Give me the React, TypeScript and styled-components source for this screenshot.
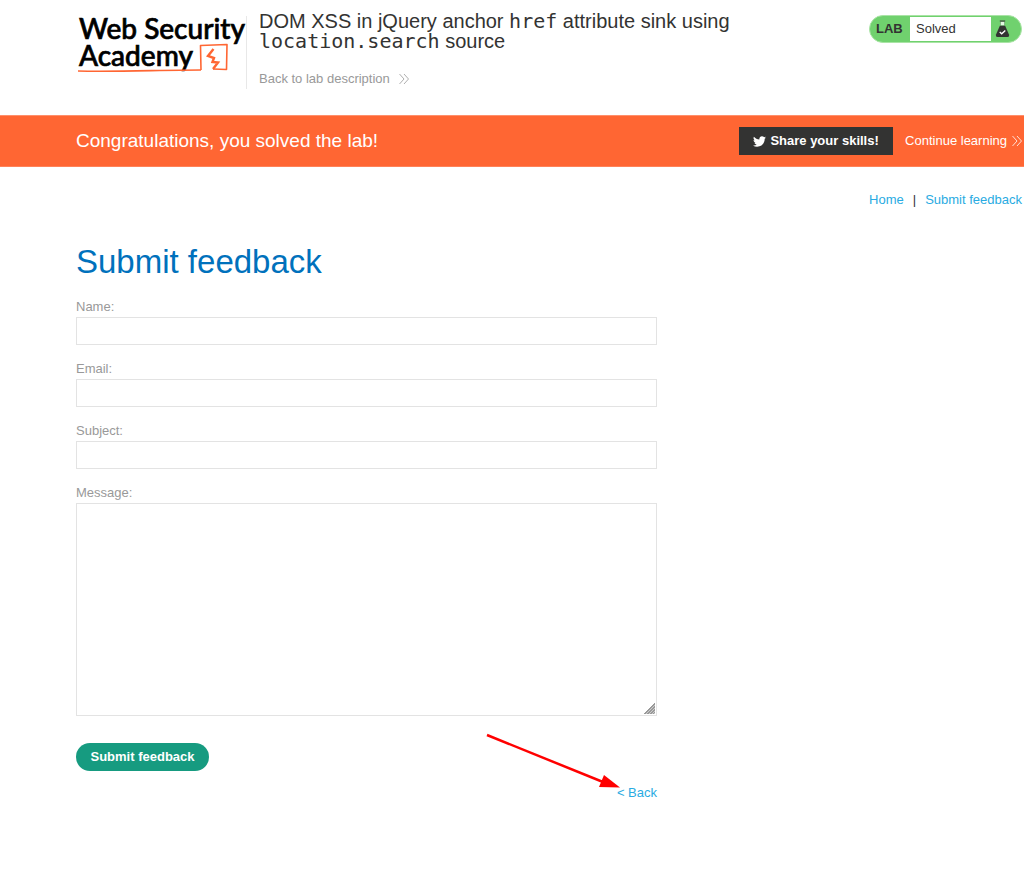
import React from "react";
import styled, { createGlobalStyle } from "styled-components";
import { FaTwitter } from "react-icons/fa";

const GlobalStyle = createGlobalStyle`
  *, *::before, *::after { box-sizing: border-box; }
  body {
    margin: 0;
    background: #fff;
    color: #333332;
    font: 13px/20px "Liberation Sans", Arial, sans-serif;
  }
  a { text-decoration: none; }
`;

const Header = styled.header`
  display: flex;
  align-items: flex-start;
  padding: 11px 2px 26px 76px;
`;

const LogoLink = styled.a`
  display: block;
  flex: none;
  height: 66px;
`;

const LogoWord = styled.text`
  font: 500 28px Lato, sans-serif;
  fill: #000;
  stroke: #000;
  stroke-width: 0.7px;
`;

const TitleBlock = styled.div`
  flex: 1;
  display: flex;
  margin-top: 5px;
  border-left: 1px solid #e8e8e8;
  min-height: 72px;
`;

const TitleInner = styled.div`
  margin-top: -5px;
  padding-left: 12px;
  max-width: 500px;
`;

const Title = styled.h2`
  margin: 0 0 18px;
  font-size: 20px;
  line-height: 20px;
  font-weight: 400;

  code {
    font: 20px/20px "DejaVu Sans Mono", monospace;
  }
`;

const ChevronLink = styled.a<{ $light?: boolean }>`
  display: inline-flex;
  align-items: center;
  gap: ${(p) => (p.$light ? 5 : 9)}px;
  color: ${(p) => (p.$light ? "#fff" : "#999")};
`;

const Badge = styled.div`
  display: flex;
  flex: none;
  margin-top: 4px;
  height: 28px;
  width: 153px;
  border: 1px solid #a9e4a5;
  border-radius: 14px;
  background: #70d16e;
  line-height: 26px;
  overflow: hidden;
`;

const BadgeLabel = styled.strong`
  width: 40px;
  padding-left: 6px;
`;

const BadgeState = styled.span`
  flex: 1;
  margin: 1px 0;
  padding-left: 6px;
  line-height: 24px;
  background: #fff;
`;

const BadgeIcon = styled.span`
  display: flex;
  align-items: center;
  width: 30px;
  padding-left: 4px;
`;

const Banner = styled.section`
  display: flex;
  align-items: center;
  gap: 12px;
  height: 52px;
  padding: 0 2px 0 76px;
  border-top: 1px solid #ff8f6b;
  border-bottom: 1px solid #ff8259;
  background: #ff6633;
  color: #fff;
`;

const BannerText = styled.p`
  flex: 1;
  margin: 0;
  font-size: 19px;
`;

const ShareButton = styled.button`
  display: flex;
  align-items: center;
  justify-content: center;
  gap: 4px;
  width: 154px;
  height: 28px;
  padding: 0;
  border: 0;
  background: #333332;
  color: #fff;
  font: bold 13px/20px "Liberation Sans", Arial, sans-serif;
`;

const Main = styled.main`
  padding: 23px 2px 40px 76px;
`;

const Nav = styled.nav`
  display: flex;
  justify-content: flex-end;
  gap: 9px;
`;

const TextLink = styled.a`
  color: #29abe2;
`;

const Heading = styled.h1`
  margin: 32px 0 15px;
  font-size: 33px;
  line-height: 40px;
  font-weight: 400;
  color: #0071bc;
`;

const Form = styled.form`
  display: flex;
  flex-direction: column;
  max-width: 581px;
`;

const Field = styled.label`
  display: block;
  margin-bottom: 14px;
  color: #999;
`;

const TextInput = styled.input`
  display: block;
  width: 100%;
  height: 28px;
  padding: 4px 8px;
  border: 1px solid #e3e3e3;
  background: #fff;
  font: inherit;
  outline: none;
`;

const TextArea = styled(TextInput).attrs({ as: "textarea" })`
  height: 213px;
  resize: vertical;

  &::-webkit-resizer {
    border: solid #fff;
    border-width: 0 1px 1px 0;
    background:
      linear-gradient(135deg, #fff 58%, transparent 58%),
      repeating-linear-gradient(135deg, #999 0 1px, #ccc 1px 2px);
  }
`;

const SubmitButton = styled.button`
  align-self: flex-start;
  width: 133px;
  height: 28px;
  margin: 13px 0 12px;
  padding: 0;
  border: 0;
  border-radius: 14px;
  background: #169b80;
  color: #fff;
  font: bold 13px/20px "Liberation Sans", Arial, sans-serif;
`;

const BackRow = styled.div`
  position: relative;
  text-align: right;
`;

const Arrow = styled.svg`
  position: absolute;
  right: 36px;
  bottom: 12px;
  pointer-events: none;
`;

function Logo() {
  return (
    <svg width="170" height="66" viewBox="0 0 170 66" role="img" aria-label="Web Security Academy">
      <LogoWord x="3" y="28">Web Security</LogoWord>
      <LogoWord x="3" y="55">Academy</LogoWord>
      <g fill="none" stroke="#ff6633" strokeLinejoin="round">
        <path d="M2 60 C40 61 85 59 125 59" strokeWidth="1.7" />
        <path d="M125 59 L124.500 34.500 L151 33.500 L150.500 58.500 L137 58" strokeWidth="1.6" />
        <path d="M137.500 38 L132 45 L138 47 L136.500 51 L142 51.500 L137 58" strokeWidth="2.4" strokeLinejoin="miter" />
      </g>
    </svg>
  );
}

function Chevrons() {
  return (
    <svg width="10" height="12" viewBox="0 0 10 12" fill="none" stroke="currentColor" strokeWidth="0.8" aria-hidden="true">
      <path d="M0.500 1 L5 6 L0.500 11 M5 1 L9.500 6 L5 11" />
    </svg>
  );
}

function Flask() {
  return (
    <svg width="15" height="18" viewBox="0 0 15 18" aria-hidden="true">
      <path d="M5 5.500 H10 L14 14.500 Q14.500 17 12.500 17 H2.500 Q0.500 17 1 14.500Z" fill="#333332" />
      <path d="M5.500 1.500 H9.500 V5.500 H5.500Z" fill="#e3f5e2" stroke="#5f8f5e" strokeWidth="0.5" />
      <path d="M4.800 1 H10.200" stroke="#333332" strokeWidth="1" />
      <path d="M4.700 12 L6.700 13.800 L10.300 10.500" fill="none" stroke="#fff" strokeWidth="1.300" />
    </svg>
  );
}

export default function App() {
  return (
    <>
      <GlobalStyle />
      <Header>
        <LogoLink href="#"><Logo /></LogoLink>
        <TitleBlock>
          <TitleInner>
            <Title>
              DOM XSS in jQuery anchor <code>href</code> attribute sink using <code>location.search</code> source
            </Title>
            <ChevronLink href="#">Back to lab description <Chevrons /></ChevronLink>
          </TitleInner>
        </TitleBlock>
        <Badge>
          <BadgeLabel>LAB</BadgeLabel>
          <BadgeState>Solved</BadgeState>
          <BadgeIcon><Flask /></BadgeIcon>
        </Badge>
      </Header>
      <Banner>
        <BannerText>Congratulations, you solved the lab!</BannerText>
        <ShareButton type="button"><FaTwitter size={13} aria-hidden="true" />Share your skills!</ShareButton>
        <ChevronLink href="#" $light>Continue learning <Chevrons /></ChevronLink>
      </Banner>
      <Main>
        <Nav>
          <TextLink href="#">Home</TextLink>
          <span>|</span>
          <TextLink href="#">Submit feedback</TextLink>
        </Nav>
        <Heading>Submit feedback</Heading>
        <Form onSubmit={(e) => e.preventDefault()}>
          <Field>Name:<TextInput type="text" name="name" /></Field>
          <Field>Email:<TextInput type="email" name="email" /></Field>
          <Field>Subject:<TextInput type="text" name="subject" /></Field>
          <Field>Message:<TextArea name="message" /></Field>
          <SubmitButton type="submit">Submit feedback</SubmitButton>
          <BackRow>
            <TextLink href="#">&lt; Back</TextLink>
            <Arrow width="136" height="58" viewBox="0 0 136 58" aria-hidden="true">
              <path d="M2 2 L118 49" stroke="#f00" strokeWidth="2.500" />
              <path d="M135 54.500 L119 42 L114 54Z" fill="#f00" />
            </Arrow>
          </BackRow>
        </Form>
      </Main>
    </>
  );
}
